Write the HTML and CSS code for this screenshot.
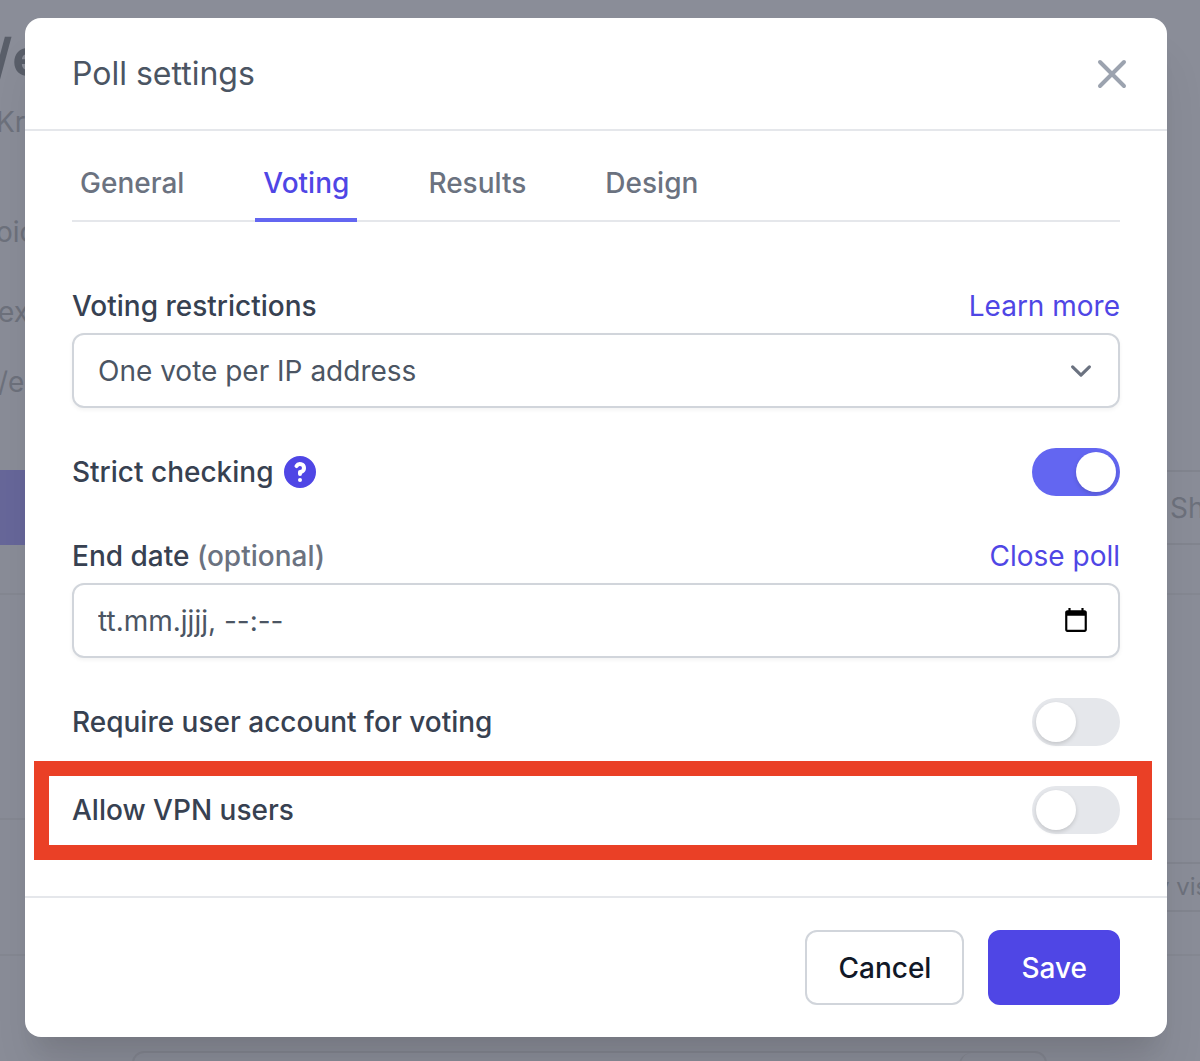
FILE: index.html
```
<!DOCTYPE html>
<html lang="en">
<head>
    <meta charset="UTF-8">
    <meta name="viewport" content="width=device-width, initial-scale=1.0">
    <title>Poll settings</title>
    <link rel="stylesheet" href="styles.css">
</head>
<body>

    <!-- Dimmed poll page behind the dialog -->
    <div class="page" aria-hidden="true">
        <div class="page-poll">
            <div class="page-title">/e</div>
            <div class="page-meta">Kr</div>
            <div class="page-label">oic</div>
            <div class="page-choice">ex</div>
            <div class="page-choice">/e</div>
            <div class="page-actions">
                <div class="page-vote"></div>
                <div class="page-share">Sh</div>
            </div>
        </div>
        <div class="page-gap"></div>
        <div class="page-comments">
            <div class="page-sort">y vis</div>
        </div>
        <div class="page-editor"><div class="page-editor-btn"></div></div>
    </div>

    <div class="overlay">
        <div class="modal" role="dialog" aria-labelledby="modalTitle">
            <div class="modal-header">
                <h1 class="modal-title" id="modalTitle">Poll settings</h1>
                <button class="close-btn" type="button" aria-label="Close">
                    <svg viewBox="0 0 24 24" fill="none" stroke="currentColor" stroke-width="2" stroke-linecap="round" stroke-linejoin="round">
                        <path d="M6 18L18 6M6 6l12 12"/>
                    </svg>
                </button>
            </div>

            <form class="modal-body" id="settingsForm">
                <nav class="tabs">
                    <a href="#general" class="tab">General</a>
                    <a href="#voting" class="tab active">Voting</a>
                    <a href="#results" class="tab">Results</a>
                    <a href="#design" class="tab">Design</a>
                </nav>

                <div class="settings">
                    <div class="field">
                        <div class="row">
                            <label class="label" for="restrictions">Voting restrictions</label>
                            <a href="#learn-more" class="link">Learn more</a>
                        </div>
                        <div class="control">
                            <select class="input" id="restrictions">
                                <option>One vote per IP address</option>
                            </select>
                            <svg class="chevron" viewBox="0 0 20 20" fill="none" stroke="currentColor" stroke-width="1.5" stroke-linecap="round" stroke-linejoin="round">
                                <path d="M6 8l4 4 4-4"/>
                            </svg>
                        </div>
                    </div>

                    <div class="row">
                        <div class="label-group">
                            <label class="label" for="strict">Strict checking</label>
                            <svg class="help" viewBox="0 0 20 20" fill="currentColor">
                                <path fill-rule="evenodd" clip-rule="evenodd" d="M18 10a8 8 0 11-16 0 8 8 0 0116 0zm-8-3a1 1 0 00-.867.5 1 1 0 11-1.731-1A3 3 0 0113 8a3.001 3.001 0 01-2 2.83V11a1 1 0 11-2 0v-1a1 1 0 011-1 1 1 0 100-2zm0 8a1 1 0 100-2 1 1 0 000 2z"/>
                            </svg>
                        </div>
                        <input class="toggle" type="checkbox" id="strict" checked>
                    </div>

                    <div class="field">
                        <div class="row">
                            <label class="label" for="endDate">End date <span class="optional">(optional)</span></label>
                            <a href="#close-poll" class="link">Close poll</a>
                        </div>
                        <div class="control">
                            <input class="input" type="text" id="endDate" placeholder="tt.mm.jjjj, --:--">
                            <button class="calendar-btn" type="button" aria-label="Pick a date">
                                <svg viewBox="0 0 24 24" fill="currentColor">
                                    <path d="M20 3h-1V1h-2v2H7V1H5v2H4c-1.1 0-2 .9-2 2v16c0 1.1.9 2 2 2h16c1.1 0 2-.9 2-2V5c0-1.1-.9-2-2-2zm0 18H4V8h16v13z"/>
                                </svg>
                            </button>
                        </div>
                    </div>

                    <div class="row">
                        <label class="label" for="account">Require user account for voting</label>
                        <input class="toggle" type="checkbox" id="account">
                    </div>

                    <div class="row highlighted">
                        <label class="label" for="vpn">Allow VPN users</label>
                        <input class="toggle" type="checkbox" id="vpn">
                    </div>
                </div>
            </form>

            <div class="modal-footer">
                <button class="btn" type="button">Cancel</button>
                <button class="btn btn-primary" type="submit" form="settingsForm">Save</button>
            </div>
        </div>
    </div>

</body>
</html>
```
FILE: styles.css
```
* {
    margin: 0;
    padding: 0;
    box-sizing: border-box;
}

body {
    position: relative;
    min-height: 100vh;
    overflow-x: hidden;
    background: #8a8d98;
    color: #374151;
    font-family: Inter, "Liberation Sans", sans-serif;
    font-size: 28px;
    line-height: 40px;
}

button,
input,
select {
    font: inherit;
    color: inherit;
}

svg {
    display: block;
}

/* page behind the dialog */
.page {
    position: absolute;
    inset: 0;
    overflow: hidden;
    color: #6d717c;
}

.page-poll {
    height: 595px;
    padding-top: 28px;
    border-bottom: 2px solid #858892;
}

.page-title {
    margin-left: -8px;
    font-size: 52px;
    font-weight: 700;
    line-height: 60px;
    color: #595e69;
}

.page-meta {
    margin: 14px 0 0 -4px;
}

.page-label {
    margin: 70px 0 40px -4px;
}

.page-choice {
    margin: 0 0 30px -2px;
}

.page-actions {
    display: flex;
    justify-content: space-between;
    margin-top: 68px;
}

.page-vote {
    width: 200px;
    height: 75px;
    background: #67679a;
}

.page-share {
    width: 64px;
    padding: 16px 0 15px 32px;
    border: 2px solid #82858f;
    border-right: 0;
}

.page-gap {
    height: 223px;
}

.page-comments {
    display: flex;
    justify-content: flex-end;
    height: 138px;
    padding-top: 42px;
    border: solid #858892;
    border-width: 2px 0;
}

.page-sort {
    width: 60px;
    height: 50px;
    padding-left: 16px;
    border: solid #82858f;
    border-width: 2px 0;
    font-size: 24px;
    line-height: 46px;
    white-space: nowrap;
}

.page-editor {
    display: flex;
    justify-content: flex-end;
    height: 80px;
    margin: 95px 153px 0 132px;
    border: 2px solid #82858f;
    border-radius: 12px;
}

.page-editor-btn {
    width: 86px;
    border-left: 2px solid #82858f;
    border-radius: 12px;
}

/* dialog */
.overlay {
    position: relative;
    padding: 18px 33px 24px 25px;
}

.modal {
    background: #fff;
    border-radius: 16px;
    box-shadow: 0 40px 50px -10px rgba(0, 0, 0, 0.1), 0 20px 20px -10px rgba(0, 0, 0, 0.06);
}

.modal-header {
    display: flex;
    justify-content: space-between;
    align-items: center;
    height: 113px;
    padding: 0 31px 0 47px;
    border-bottom: 2px solid #e5e7eb;
}

.modal-title {
    font-size: 32px;
    font-weight: 400;
    color: #4b5563;
}

.close-btn {
    width: 48px;
    height: 48px;
    border: 0;
    background: none;
    color: #9ca3af;
    cursor: pointer;
}

.modal-body {
    padding: 32px 47px 62px;
}

.tabs {
    display: flex;
    gap: 63px;
    border-bottom: 2px solid #e5e7eb;
}

.tab {
    padding: 0 8px 15px;
    margin-bottom: -2px;
    border-bottom: 4px solid transparent;
    font-weight: 500;
    color: #6b7280;
    text-decoration: none;
}

.tab.active {
    color: #4f46e5;
    border-color: #6366f1;
}

.settings {
    display: flex;
    flex-direction: column;
    gap: 40px;
    margin-top: 64px;
}

.row {
    position: relative;
    display: flex;
    justify-content: space-between;
    align-items: center;
}

.label {
    font-weight: 500;
}

.label-group {
    display: flex;
    align-items: center;
    gap: 6px;
}

.help {
    width: 40px;
    height: 40px;
    color: #4f46e5;
}

.optional {
    color: #6b7280;
}

.link {
    color: #4f46e5;
    text-decoration: none;
}

.control {
    position: relative;
    margin-top: 7px;
}

.input {
    display: block;
    width: 100%;
    height: 75px;
    padding: 0 80px 0 24px;
    border: 2px solid #d1d5db;
    border-radius: 12px;
    background: #fff;
    box-shadow: 0 2px 4px rgba(0, 0, 0, 0.05);
    color: #4b5563;
    appearance: none;
}

.input::placeholder {
    color: #4b5563;
    opacity: 1;
}

.chevron {
    position: absolute;
    top: 17px;
    right: 18px;
    width: 42px;
    height: 42px;
    color: #6b7280;
    pointer-events: none;
}

.calendar-btn {
    position: absolute;
    top: 24px;
    right: 31px;
    width: 26px;
    height: 26px;
    border: 0;
    background: none;
    color: #000;
    cursor: pointer;
}

.toggle {
    width: 88px;
    height: 48px;
    padding: 4px;
    border-radius: 24px;
    background: #e5e7eb;
    appearance: none;
    cursor: pointer;
}

.toggle::before {
    content: "";
    display: block;
    width: 40px;
    height: 40px;
    border-radius: 50%;
    background: #fff;
    box-shadow: 0 2px 4px rgba(0, 0, 0, 0.15);
}

.toggle:checked {
    background: #6366f1;
}

.toggle:checked::before {
    margin-left: 40px;
}

/* red frame over the row */
.highlighted::after {
    content: "";
    position: absolute;
    inset: -25px -32px -26px -38px;
    border: 15px solid #ea4026;
    pointer-events: none;
}

.modal-footer {
    display: flex;
    justify-content: flex-end;
    gap: 24px;
    padding: 32px 47px;
    border-top: 2px solid #e5e7eb;
}

.btn {
    height: 75px;
    padding: 0 31px;
    border: 2px solid #d1d5db;
    border-radius: 12px;
    background: #fff;
    color: #111827;
    font-weight: 500;
    cursor: pointer;
}

.btn-primary {
    border-color: #4f46e5;
    background: #4f46e5;
    color: #fff;
}
```
